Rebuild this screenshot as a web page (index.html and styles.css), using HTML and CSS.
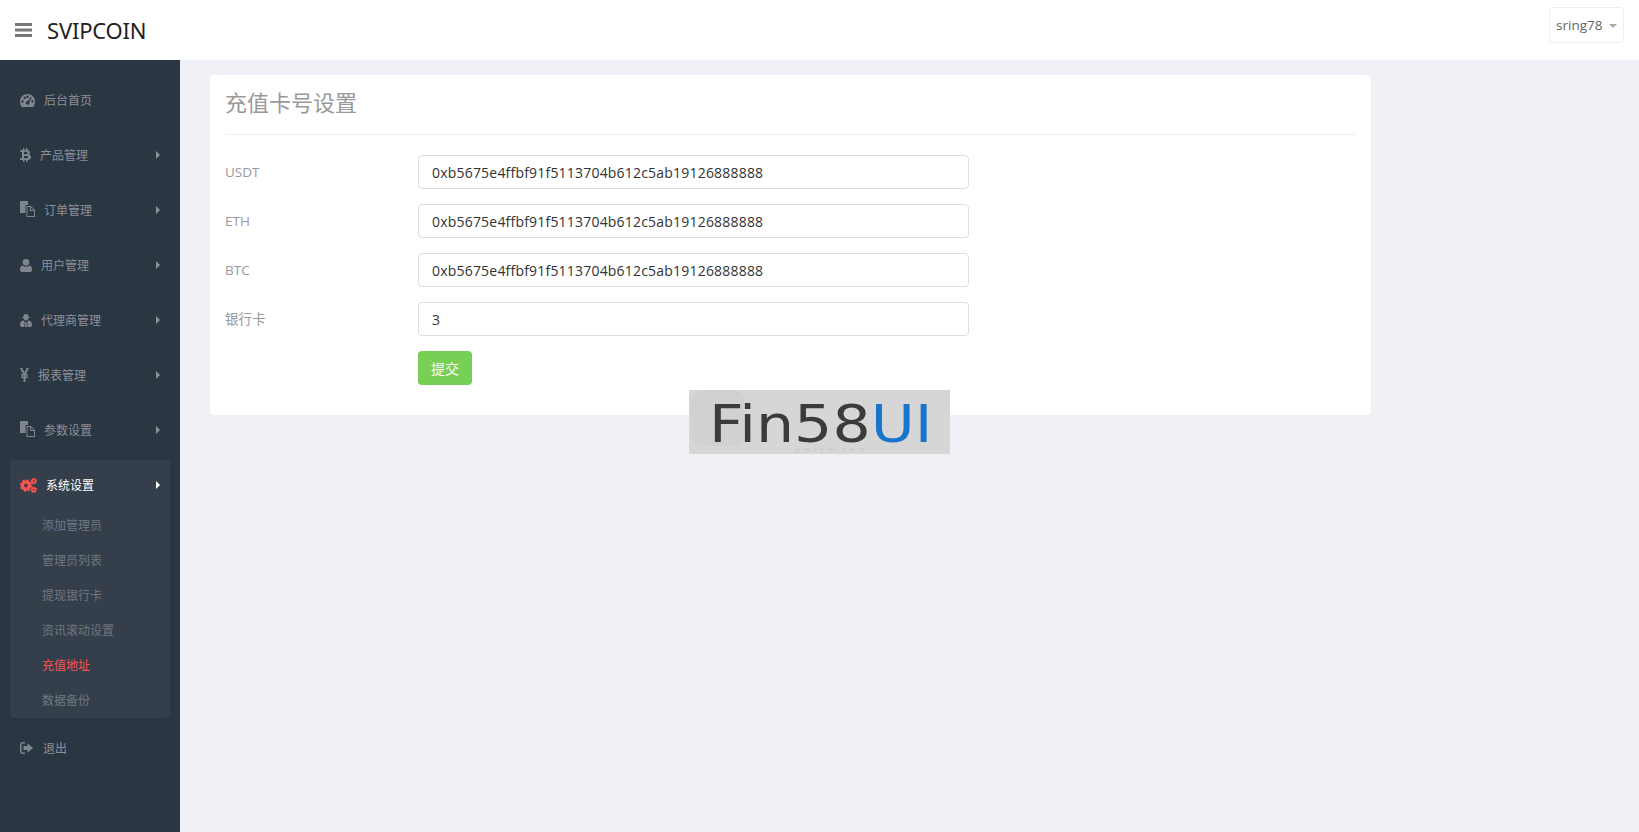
FILE: index.html
```html
<!DOCTYPE html>
<html lang="zh-CN">
  <head>
    <meta charset="utf-8" />
    <title>SVIPCOIN</title>
    <link rel="stylesheet" href="styles.css">
  </head>
  <body>
    <header class="topbar">
      <div class="brand">
        <svg class="icon-bars" viewBox="0 0 17 14"><path d="M0 0h17v3H0zM0 5.500h17v3H0zM0 11h17v3H0z"/></svg>
        <span class="brand-name">SVIPCOIN</span>
      </div>
      <button class="user-btn">sring78 <span class="caret-down"></span></button>
    </header>

    <div class="layout">
      <aside class="sidebar">
        <ul class="nav">
          <li class="nav-item">
            <a class="nav-link">
              <svg class="ico ico-15" viewBox="0 0 15 13"><path fill-rule="evenodd" d="M7.500 0C3.400 0 0 3.300 0 7.500c0 2 .7 3.900 1.800 5.500h11.400C14.300 11.400 15 9.500 15 7.500 15 3.300 11.600 0 7.500 0zM2.500 6.200a1.200 1.200 0 1 1 0 2.400 1.200 1.200 0 0 1 0-2.400zM4.700 2.500a1.200 1.200 0 1 1 0 2.400 1.200 1.200 0 0 1 0-2.400zM7.500 1.600a1.200 1.200 0 1 1 0 2.400 1.200 1.200 0 0 1 0-2.400zM10.800 3l1 .6-2.600 4.500c.5.700.3 1.700-.4 2.300-.8.600-2 .4-2.600-.4-.6-.8-.4-2 .4-2.600.4-.3.900-.4 1.400-.3zM12.500 6.200a1.200 1.200 0 1 1 0 2.400 1.200 1.200 0 0 1 0-2.400z"/></svg>
              <span>后台首页</span>
            </a>
          </li>
          <li class="nav-item">
            <a class="nav-link has-sub">
              <svg class="ico ico-11" viewBox="0 0 11 14"><path fill-rule="evenodd" d="M3 0h1.500v2H6V0h1.500v2.100C9.200 2.400 10 3.300 10 4.600c0 .9-.5 1.600-1.200 2C10 7 11 7.900 11 9.300c0 1.700-1.200 2.600-3.500 2.700v2H6v-2H4.500v2H3v-2H0l.4-1.900h1.200c.3 0 .4-.2.4-.4V4.300c0-.3-.2-.4-.5-.4H.3V2H3zM4 3.800v2.500h1.600c1 0 1.900-.3 1.900-1.300S6.600 3.800 5.600 3.800zM4 7.900v2.400h2c1.100 0 2.100-.2 2.100-1.200S7.100 7.900 6 7.900z"/></svg>
              <span>产品管理</span>
            </a>
          </li>
          <li class="nav-item">
            <a class="nav-link has-sub">
              <svg class="ico ico-files" viewBox="0 0 15 16"><path fill-rule="evenodd" d="M0 0h8v4H5.500v8H0zM6.500 5H11l4 4v7H6.500zM11 6.200V9h2.800zM7.500 6v9H14V10h-4V6z"/></svg>
              <span>订单管理</span>
            </a>
          </li>
          <li class="nav-item">
            <a class="nav-link has-sub">
              <svg class="ico ico-12" viewBox="0 0 12 13"><path d="M6 0a3.300 3.300 0 1 1 0 6.600A3.300 3.300 0 0 1 6 0zM2.600 6.400C3.500 7.200 4.700 7.600 6 7.600s2.500-.4 3.400-1.200C11.200 6.700 12 8.200 12 10.700c0 1.400-.9 2.300-2.200 2.300H2.200C.9 13 0 12.100 0 10.700c0-2.500.8-4 2.600-4.300z"/></svg>
              <span>用户管理</span>
            </a>
          </li>
          <li class="nav-item">
            <a class="nav-link has-sub">
              <svg class="ico ico-12" viewBox="0 0 12 13"><path fill-rule="evenodd" d="M4.200 0l1.800.5L7.800 0l.9 2.800c.6.100 1.100.3 1.100.6 0 .3-.7.500-1.300.6-.2 1.300-1.200 2.400-2.500 2.400S3.700 5.300 3.500 4C2.900 3.900 2.200 3.700 2.200 3.400c0-.3.500-.5 1.100-.6zM2.500 6.500l1.400.3L4.800 8 4.300 13H1.800C.8 13 0 12.200 0 11.200c0-2 .6-3.900 2.500-4.700zM9.500 6.500C11.400 7.300 12 9.200 12 11.200c0 1-.8 1.800-1.800 1.800H7.700l-.5-5 .9-1.200zM5.400 8h1.200l.4 5H5z"/></svg>
              <span>代理商管理</span>
            </a>
          </li>
          <li class="nav-item">
            <a class="nav-link has-sub">
              <svg class="ico ico-9" viewBox="0 0 9 14"><path d="M0 0h2.200l2.300 4.600L6.800 0H9L6 6h2v1.400H5.500v1.100H8v1.400H5.500V14h-2V9.900H1V8.500h2.500V7.400H1V6h2z"/></svg>
              <span>报表管理</span>
            </a>
          </li>
          <li class="nav-item">
            <a class="nav-link has-sub">
              <svg class="ico ico-files" viewBox="0 0 15 16"><path fill-rule="evenodd" d="M0 0h8v4H5.500v8H0zM6.500 5H11l4 4v7H6.500zM11 6.200V9h2.800zM7.500 6v9H14V10h-4V6z"/></svg>
              <span>参数设置</span>
            </a>
          </li>
          <li class="nav-item open">
            <a class="nav-link has-sub">
              <svg class="ico ico-17" viewBox="0 0 17 15">
                <circle class="gear" cx="6" cy="7.500" r="3.600" stroke-width="3.400"/>
                <circle class="gear-teeth" cx="6" cy="7.500" r="5.200" stroke-width="2" stroke-dasharray="2 2.080"/>
                <circle class="gear" cx="13.700" cy="3.200" r="1.700" stroke-width="1.600"/>
                <circle class="gear-teeth" cx="13.700" cy="3.200" r="2.700" stroke-width="1.200" stroke-dasharray="1.100 1.020"/>
                <circle class="gear" cx="13.700" cy="11.800" r="1.700" stroke-width="1.600"/>
                <circle class="gear-teeth" cx="13.700" cy="11.800" r="2.700" stroke-width="1.200" stroke-dasharray="1.100 1.020"/>
              </svg>
              <span>系统设置</span>
            </a>
            <ul class="subnav">
              <li><a>添加管理员</a></li>
              <li><a>管理员列表</a></li>
              <li><a>提现银行卡</a></li>
              <li><a>资讯滚动设置</a></li>
              <li class="current"><a>充值地址</a></li>
              <li><a>数据备份</a></li>
            </ul>
          </li>
          <li class="nav-item">
            <a class="nav-link">
              <svg class="ico ico-13" viewBox="0 0 13 12"><path d="M5 0v1.500H2.500c-.6 0-1 .4-1 1v7c0 .6.400 1 1 1H5V12H2.500C1.100 12 0 10.900 0 9.500v-7C0 1.100 1.100 0 2.500 0zM7.500 1.200L13 6l-5.500 4.800V8H3.500V4h4z"/></svg>
              <span>退出</span>
            </a>
          </li>
        </ul>
      </aside>

      <main class="content">
        <section class="card">
          <h2 class="card-title">充值卡号设置</h2>
          <form class="form">
            <div class="form-row">
              <label>USDT</label>
              <input type="text" value="0xb5675e4ffbf91f5113704b612c5ab19126888888">
            </div>
            <div class="form-row">
              <label>ETH</label>
              <input type="text" value="0xb5675e4ffbf91f5113704b612c5ab19126888888">
            </div>
            <div class="form-row">
              <label>BTC</label>
              <input type="text" value="0xb5675e4ffbf91f5113704b612c5ab19126888888">
            </div>
            <div class="form-row">
              <label>银行卡</label>
              <input type="text" value="3">
            </div>
            <div class="form-row">
              <label></label>
              <button type="button" class="btn-submit">提交</button>
            </div>
          </form>
        </section>
      </main>
    </div>

    <!-- watermark sits over the page -->
    <div class="watermark">
      <span class="wm-text">Fin58<span class="wm-ui">UI</span></span>
      <span class="wm-ghost">pmzym.com</span>
    </div>
  </body>
</html>
```

FILE: styles.css
```css
html, body {
  height: 100%;
}
body {
  margin: 0;
  background: #f0f1f6;
  font-family: "Open Sans", "Noto Sans CJK SC", sans-serif;
  font-size: 14px;
  color: #333;
  overflow: hidden;
}
ul {
  list-style: none;
  margin: 0;
  padding: 0;
}

.topbar {
  height: 60px;
  background: #fff;
  display: flex;
  align-items: center;
  justify-content: space-between;
  padding: 0 15px;
  box-sizing: border-box;
}
.brand {
  display: flex;
  align-items: center;
}
.icon-bars {
  width: 17px;
  height: 14px;
  fill: #777;
}
.brand-name {
  margin-left: 15px;
  font-size: 22px;
  letter-spacing: -0.2px;
  color: #222;
  font-family: "Noto Sans", sans-serif;
}
.user-btn {
  height: 36px;
  width: 75px;
  margin-top: -10px;
  padding: 0;
  background: #fff;
  border: 1px solid #eee;
  border-radius: 4px;
  font: inherit;
  font-size: 13.500px;
  color: #666;
  white-space: nowrap;
}
.caret-down {
  display: inline-block;
  margin-left: 3px;
  vertical-align: middle;
  border-top: 4px solid #aaa;
  border-left: 4px solid transparent;
  border-right: 4px solid transparent;
}

.layout {
  display: flex;
  height: 772px;
}

.sidebar {
  width: 180px;
  flex: none;
  background: #2b3643;
  padding: 15px 10px 0;
  box-sizing: border-box;
}
.nav-item {
  margin-bottom: 5px;
}
.nav-link {
  height: 50px;
  padding: 0 10px;
  display: flex;
  align-items: center;
  position: relative;
  font-size: 12px;
  color: #8b9098;
}
.nav-link.has-sub::after { /* arrow on the right */
  content: "";
  position: absolute;
  right: 10px;
  top: 21px;
  border-left: 4px solid #8b9098;
  border-top: 4px solid transparent;
  border-bottom: 4px solid transparent;
}
.ico {
  flex: none;
  margin-right: 9px;
  fill: #7f868f;
}
.ico-9 { width: 9px; height: 14px; }
.ico-11 { width: 11px; height: 14px; }
.ico-12 { width: 12px; height: 13px; }
.ico-13 { width: 13px; height: 12px; margin-right: 10px; }
.ico-15 { width: 15px; height: 13px; }
.ico-17 { width: 17px; height: 15px; }
.ico-files { width: 15px; height: 16px; margin-top: -3px; }

.nav-item.open {
  background: #353f4c;
  border-radius: 4px;
}
.nav-item.open .nav-link {
  height: 46px;
  padding-top: 2px;
  color: #fff;
}
.nav-item.open .nav-link::after {
  top: 21px;
  border-left-color: #fff;
}
.gear {
  fill: none;
  stroke: #f9544f;
}
.gear-teeth {
  fill: none;
  stroke: #f9544f;
}
.subnav li {
  height: 35px;
  line-height: 35px;
  padding-left: 32px;
  font-size: 12px;
  color: #6f7781;
}
.subnav li.current {
  color: #f9544f;
}

.content {
  flex: 1;
  padding: 15px 30px;
}
.card {
  width: 1161px;
  height: 340px;
  background: #fff;
  border-radius: 4px;
  padding: 0 15px;
  box-sizing: border-box;
}
.card-title {
  margin: 0;
  height: 59px;
  line-height: 54px;
  font-size: 22px;
  font-weight: 400;
  color: #999;
  border-bottom: 1px solid #eee;
}
.form {
  padding-top: 20px;
}
.form-row {
  display: flex;
  align-items: flex-start;
  margin-bottom: 15px;
}
.form-row label {
  width: 193px;
  flex: none;
  font-size: 13.500px;
  line-height: 34px;
  color: #999;
}
.form-row input {
  width: 551px;
  height: 34px;
  box-sizing: border-box;
  padding: 0 13px;
  border: 1px solid #ddd;
  border-radius: 4px;
  font: inherit;
  letter-spacing: 0.2px;
  color: #333;
  outline: none;
}
.btn-submit {
  width: 54px;
  height: 34px;
  padding: 0;
  background: #78cf55;
  border: 0;
  border-radius: 4px;
  font: inherit;
  color: #fff;
}

.watermark {
  position: absolute;
  left: 689px;
  top: 390px;
  width: 261px;
  height: 64px;
  background: #d6d6d6;
  overflow: hidden;
  filter: blur(0.5px);
}
.watermark::before { /* faint logo block behind the text */
  content: "";
  position: absolute;
  left: 2px;
  top: 0;
  width: 54px;
  height: 56px;
  border-radius: 12px;
  background: #d1d1d1;
}
.wm-text {
  position: absolute;
  left: 20px;
  top: 10px;
  height: 50px;
  font-family: "DejaVu Sans", sans-serif;
  font-size: 51px;
  line-height: 50px;
  color: #3b3b3b;
  white-space: nowrap;
  transform: scaleX(1.18);
  transform-origin: left center;
}
.wm-ui {
  color: #1b74cc;
}
.wm-ghost {
  position: absolute;
  left: 106px;
  top: 54px;
  font-size: 8px;
  line-height: 10px;
  letter-spacing: 3px;
  color: #c8c8c8;
}
```
